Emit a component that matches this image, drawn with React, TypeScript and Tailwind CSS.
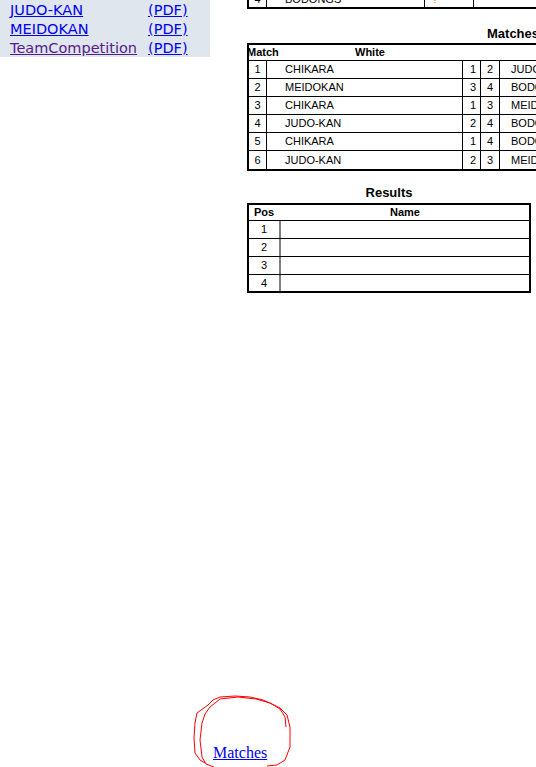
import React from 'react';

const sidebarLinks = [
  { name: 'JUDO-KAN', visited: false },
  { name: 'MEIDOKAN', visited: false },
  { name: 'TeamCompetition', visited: true },
];

const matches = [
  { id: 1, white: 'CHIKARA', w: 1, b: 2, blue: 'JUDO-KAN' },
  { id: 2, white: 'MEIDOKAN', w: 3, b: 4, blue: 'BODONGS' },
  { id: 3, white: 'CHIKARA', w: 1, b: 3, blue: 'MEIDOKAN' },
  { id: 4, white: 'JUDO-KAN', w: 2, b: 4, blue: 'BODONGS' },
  { id: 5, white: 'CHIKARA', w: 1, b: 4, blue: 'BODONGS' },
  { id: 6, white: 'JUDO-KAN', w: 2, b: 3, blue: 'MEIDOKAN' },
];

export default function App() {
  return (
    <div className="relative flex h-[767px] w-[536px] flex-col overflow-hidden bg-white">
      <div className="flex">
        {/* Sidebar */}
        <div className="h-[57px] w-[210px] shrink-0 bg-[#dfe6ee] pl-[10px] pt-[1px] font-['DejaVu_Sans',sans-serif] text-[14.5px] leading-[19px]">
          {sidebarLinks.map((l) => (
            <div key={l.name} className="flex">
              <a href="#" className={`w-[138px] underline ${l.visited ? 'text-[#551a8b]' : 'text-[#0000ee]'}`}>
                {l.name}
              </a>
              <a href="#" className="text-[#0000ee] underline">(PDF)</a>
            </div>
          ))}
        </div>

        {/* Sheet */}
        <div className="ml-[37px] w-[600px] shrink-0 font-['Liberation_Sans',Arial,sans-serif] text-[11px] text-black">
          {/* tail of the pool table */}
          <div className="flex h-[9px] flex-col justify-end overflow-hidden">
            <div className="flex h-[18px] border-x-2 border-b-2 border-black leading-[16px]">
              <div className="w-[17px] text-center">4</div>
              <div className="w-[158px] border-l border-black pl-[18px]">BODONGS</div>
              <div className="w-[49px] border-l border-black pl-[7px] text-[#e07020]">?</div>
              <div className="flex-1 border-l border-black"></div>
            </div>
          </div>

          <div className="mt-[17px] pl-[240px] text-[13px] font-bold leading-[15px]">Matches</div>

          {/* Matches table */}
          <div className="mt-[2px] border-2 border-black">
            <div className="flex h-[16px] items-center border-b border-black font-bold">
              <div className="-ml-[2px] w-[21px]">Match</div>
              <div className="w-[196px] pl-[8px] text-center">White</div>
            </div>
            {matches.map((m, i) => (
              <div
                key={m.id}
                className={`flex h-[18px] items-center ${i < matches.length - 1 ? 'border-b border-black' : ''}`}
              >
                <div className="w-[17px] text-center">{m.id}</div>
                <div className="flex h-full w-[196px] items-center border-l border-black pl-[18px]">{m.white}</div>
                <div className="flex h-full w-[18px] items-center justify-end border-l border-black pr-[4px]">{m.w}</div>
                <div className="flex h-full w-[19px] items-center justify-center border-l border-black">{m.b}</div>
                <div className="flex h-full flex-1 items-center border-l border-black pl-[11px]">{m.blue}</div>
              </div>
            ))}
          </div>

          <div className="mt-[14px] w-[284px] text-center text-[13px] font-bold leading-[15px]">Results</div>

          {/* Results table */}
          <div className="mt-[3px] w-[284px] border-2 border-black">
            <div className="flex h-[16px] items-center border-b border-black font-bold">
              <div className="w-[32px] pl-[5px]">Pos</div>
              <div className="flex-1 text-center">Name</div>
            </div>
            {[1, 2, 3, 4].map((p) => (
              <div
                key={p}
                className={`flex items-center ${p < 4 ? 'h-[18px] border-b border-black' : 'h-[16px]'}`}
              >
                <div className="w-[30px] text-center">{p}</div>
                <div className="h-full flex-1 border-l-2 border-[#808080]"></div>
              </div>
            ))}
          </div>
        </div>
      </div>

      <div className="flex-1"></div>

      {/* Footer link with hand-drawn mark */}
      <div className="relative h-[23px] pl-[213px] font-['Liberation_Serif','Times_New_Roman',serif] text-[16px] leading-[18px]">
        <a href="#" className="text-[#0000ee] underline">Matches</a>
        <svg
          className="pointer-events-none absolute left-[188px] top-[-49px]"
          width="110"
          height="80"
          viewBox="188 695 110 80"
          fill="none"
          stroke="#ff0000"
          strokeWidth="1"
        >
          <polyline points="205,763 200,760 195,753 194,738 195,723 197,713 208,705 213,700 220,697 235,696 250,697 263,700 272,704 280,708 287,715 290,727 290,747 285,760 277,765 267,766" />
          <polyline points="214,767 206,764 202,757 200,740 202,723 205,714 210,707 220,699 238,697 256,699 270,703 280,709 285,717 286,727" />
        </svg>
      </div>
    </div>
  );
}
